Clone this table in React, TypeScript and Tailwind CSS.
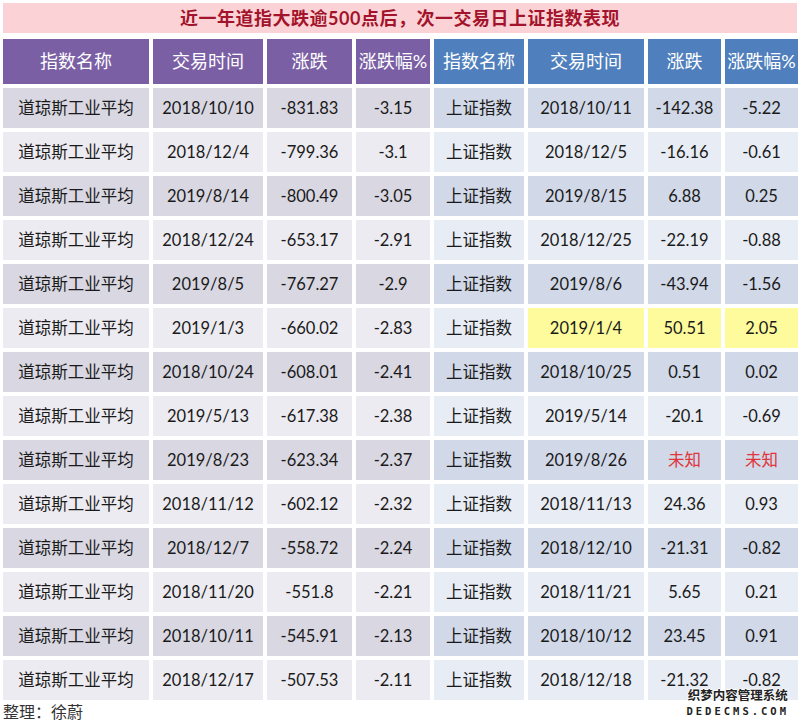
const rows: string[][] = [
  ["2018/10/10", "-831.83", "-3.15", "2018/10/11", "-142.38", "-5.22"],
  ["2018/12/4", "-799.36", "-3.1", "2018/12/5", "-16.16", "-0.61"],
  ["2019/8/14", "-800.49", "-3.05", "2019/8/15", "6.88", "0.25"],
  ["2018/12/24", "-653.17", "-2.91", "2018/12/25", "-22.19", "-0.88"],
  ["2019/8/5", "-767.27", "-2.9", "2019/8/6", "-43.94", "-1.56"],
  ["2019/1/3", "-660.02", "-2.83", "2019/1/4", "50.51", "2.05"],
  ["2018/10/24", "-608.01", "-2.41", "2018/10/25", "0.51", "0.02"],
  ["2019/5/13", "-617.38", "-2.38", "2019/5/14", "-20.1", "-0.69"],
  ["2019/8/23", "-623.34", "-2.37", "2019/8/26", "未知", "未知"],
  ["2018/11/12", "-602.12", "-2.32", "2018/11/13", "24.36", "0.93"],
  ["2018/12/7", "-558.72", "-2.24", "2018/12/10", "-21.31", "-0.82"],
  ["2018/11/20", "-551.8", "-2.21", "2018/11/21", "5.65", "0.21"],
  ["2018/10/11", "-545.91", "-2.13", "2018/10/12", "23.45", "0.91"],
  ["2018/12/17", "-507.53", "-2.11", "2018/12/18", "-21.32", "-0.82"],
];

const heads = ["指数名称", "交易时间", "涨跌", "涨跌幅%"];

function Cell({ children, className }: { children: React.ReactNode; className: string }) {
  return <div className={"flex items-center justify-center " + className}>{children}</div>;
}

export default function App() {
  return (
    <div
      className="relative w-[800px] h-[724px] bg-white px-[3px] pt-[3px] text-[#1a1a1a]"
      style={{ fontFamily: 'Lato, "Noto Sans CJK SC", sans-serif' }}
    >
      <div className="h-[30px] bg-[#fbd3d7] flex items-center justify-center text-[18px] font-bold text-[#a3132b] tracking-[0.5px]">
        近一年道指大跌逾500点后，次一交易日上证指数表现
      </div>

      <div className="mt-[6px] grid grid-cols-[146px_110px_85px_74px_90px_116px_73px_73px] gap-1 text-[16.5px]">
        {heads.map((h) => (
          <Cell key={"l" + h} className="h-[45px] bg-[#7b5fa5] text-white text-[18px]">
            {h}
          </Cell>
        ))}
        {heads.map((h) => (
          <Cell key={"r" + h} className="h-[45px] bg-[#4f7fbc] text-white text-[18px]">
            {h}
          </Cell>
        ))}

        {rows.map((r, i) => {
          const odd = i % 2 === 0;
          const left = odd ? "bg-[#d8d7e2]" : "bg-[#ecebf1]";
          const right = odd ? "bg-[#d1d8e8]" : "bg-[#e8ecf4]";
          const hl = i === 5;
          const red = i === 8;
          return [
            <Cell key={i + "a"} className={"h-[40px] " + left}>道琼斯工业平均</Cell>,
            <Cell key={i + "b"} className={"h-[40px] " + left}>{r[0]}</Cell>,
            <Cell key={i + "c"} className={"h-[40px] " + left}>{r[1]}</Cell>,
            <Cell key={i + "d"} className={"h-[40px] " + left}>{r[2]}</Cell>,
            <Cell key={i + "e"} className={"h-[40px] " + right}>上证指数</Cell>,
            <Cell key={i + "f"} className={"h-[40px] " + (hl ? "bg-[#fdfb9c]" : right)}>{r[3]}</Cell>,
            <Cell key={i + "g"} className={"h-[40px] " + (hl ? "bg-[#fdfb9c]" : right) + (red ? " text-[#e0353b]" : "")}>
              {r[4]}
            </Cell>,
            <Cell key={i + "h"} className={"h-[40px] " + (hl ? "bg-[#fdfb9c]" : right) + (red ? " text-[#e0353b]" : "")}>
              {r[5]}
            </Cell>,
          ];
        })}
      </div>

      <div className="mt-[1px] text-[16px] text-[#333] leading-[22px]">整理：徐蔚</div>

      {/* watermark */}
      <div className="absolute right-[11px] bottom-[8px] flex flex-col items-center leading-none">
        <span
          className="text-[12.5px] font-bold text-[#222]"
          style={{ textShadow: "1px 0 #fff, -1px 0 #fff, 0 1px #fff, 0 -1px #fff" }}
        >
          织梦内容管理系统
        </span>
        <span
          className="mt-[3px] text-[10.5px] font-bold text-[#222] tracking-[3px]"
          style={{ fontFamily: '"DejaVu Sans Mono", monospace', textShadow: "1px 0 #fff, -1px 0 #fff, 0 1px #fff, 0 -1px #fff" }}
        >
          DEDECMS.COM
        </span>
      </div>
    </div>
  );
}
